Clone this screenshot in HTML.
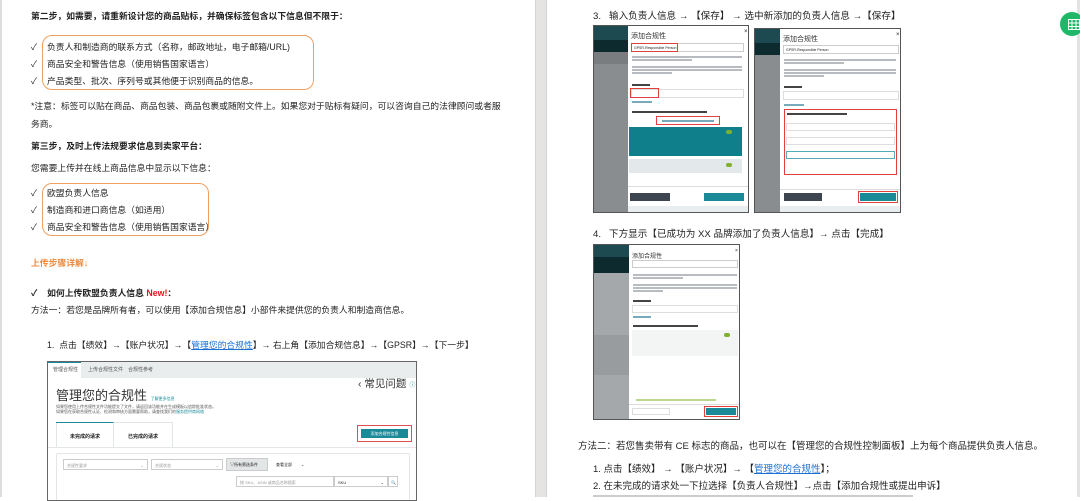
<!DOCTYPE html>
<html><head><meta charset="utf-8">
<style>
*{margin:0;padding:0;box-sizing:border-box}
body{width:1080px;height:497px;overflow:hidden;background:#fff;position:relative;font-family:"Liberation Sans","Noto Sans CJK SC",sans-serif;color:#222}
.a{position:absolute;white-space:nowrap}
.t{font-size:8.8px;line-height:12px}
.r{font-size:9.5px;line-height:12px}
.b{font-weight:bold}
.box{position:absolute;border:1.3px solid #f0a060;border-radius:10px}
.tx{position:absolute;height:1.5px;background:#b8bcc0}
.lk{color:#1a6fd1;text-decoration:underline}
</style></head><body>
<div class="a" style="left:0;top:0;width:2px;height:497px;background:#ddd"></div>
<div class="a" style="left:535px;top:0;width:12px;height:497px;background:#e6e3e3;border-left:1px solid #d5d2d2;border-right:1px solid #d5d2d2"></div>
<div class="a" style="left:1077px;top:0;width:3px;height:497px;background:#e3e3e3"></div>

<!-- left page -->
<div class="a t b" style="left:31px;top:10px">第二步，如需要，请重新设计您的商品贴标，并确保标签包含以下信息但不限于：</div>
<div class="box" style="left:42px;top:35px;width:272px;height:55px"></div>
<div class="a t" style="left:31px;top:41px">✓</div><div class="a t" style="left:47px;top:41px">负责人和制造商的联系方式（名称，邮政地址，电子邮箱/URL)</div>
<div class="a t" style="left:31px;top:58px">✓</div><div class="a t" style="left:47px;top:58px">商品安全和警告信息（使用销售国家语言）</div>
<div class="a t" style="left:31px;top:75px">✓</div><div class="a t" style="left:47px;top:75px">产品类型、批次、序列号或其他便于识别商品的信息。</div>
<div class="a t" style="left:31px;top:100px">*注意：标签可以贴在商品、商品包装、商品包裹或随附文件上。如果您对于贴标有疑问，可以咨询自己的法律顾问或者服</div>
<div class="a t" style="left:31px;top:118px">务商。</div>
<div class="a t b" style="left:31px;top:140px">第三步，及时上传法规要求信息到卖家平台：</div>
<div class="a t" style="left:31px;top:162px">您需要上传并在线上商品信息中显示以下信息：</div>
<div class="box" style="left:42px;top:183px;width:167px;height:53px"></div>
<div class="a t" style="left:31px;top:187px">✓</div><div class="a t" style="left:47px;top:187px">欧盟负责人信息</div>
<div class="a t" style="left:31px;top:204px">✓</div><div class="a t" style="left:47px;top:204px">制造商和进口商信息（如适用）</div>
<div class="a t" style="left:31px;top:221px">✓</div><div class="a t" style="left:47px;top:221px">商品安全和警告信息（使用销售国家语言）</div>
<div class="a t b" style="left:31px;top:257px;color:#f08a3c">上传步骤详解↓</div>
<div class="a t b" style="left:31px;top:287px">✓&nbsp;&nbsp;&nbsp; 如何上传欧盟负责人信息 <span style="color:#e8131a">New!</span>：</div>
<div class="a t" style="left:31px;top:304px">方法一：若您是品牌所有者，可以使用【添加合规信息】小部件来提供您的负责人和制造商信息。</div>
<div class="a t" style="left:47px;top:339px">1.&nbsp; 点击【绩效】→【账户状况】→【<span class="lk">管理您的合规性</span>】→ 右上角【添加合规信息】→【GPSR】→【下一步】</div>

<!-- screenshot left -->
<div class="a" style="left:47px;top:361px;width:370px;height:140px;border:1.5px solid #666;background:#fff;overflow:hidden">
 <div class="a" style="left:0;top:0;width:370px;height:16px;background:#eaeded"></div>
 <div class="a" style="left:0;top:0;width:33px;height:16px;background:#fff;border-top:1.5px solid #1a8a99"></div>
 <div class="a" style="left:5px;top:4px;font-size:5px;color:#555">管理合规性</div>
 <div class="a" style="left:40px;top:4px;font-size:5px;color:#555">上传合规性文件</div>
 <div class="a" style="left:80px;top:4px;font-size:5px;color:#555">合规性参考</div>
 <div class="a" style="left:8px;top:23px;font-size:13px;color:#333">管理您的合规性 <span style="font-size:4px;color:#1a8a99">了解更多信息</span></div>
 <div class="a" style="left:8px;top:42px;font-size:4px;color:#555;line-height:5px">如果您使用上传合规性文件功能提交了文件，请返回该功能并在生成模板以追踪批准状态。<br>如果您在获取合规性认证、检测和审核方面需要帮助，请查找我们的<span style="color:#1a8a99">服务提供商网络</span></div>
 <div class="a" style="left:310px;top:14px;font-size:10.5px;color:#333">‹ 常见问题 <span style="font-size:6px;color:#1a8a99">ⓘ</span></div>
 <div class="a" style="left:8px;top:60px;width:117px;height:25px;border:1px solid #e3e6e6;border-bottom:none"></div>
 <div class="a" style="left:8px;top:60px;width:58px;height:25px;border-top:1.5px solid #1a8a99;border-right:1px solid #e3e6e6"></div>
 <div class="a b" style="left:22px;top:71px;font-size:5px">未完成的请求</div>
 <div class="a b" style="left:80px;top:71px;font-size:5px">已完成的请求</div>
 <div class="a" style="left:309px;top:63px;width:55px;height:17px;border:1px solid #e05050"></div>
 <div class="a" style="left:313px;top:67px;width:47px;height:9px;background:#1a8a99;color:#fff;font-size:4px;text-align:center;line-height:9px">添加合规性信息</div>
 <div class="a" style="left:0;top:85px;width:370px;height:1px;background:#e3e6e6"></div>
 <div class="a" style="left:8px;top:91px;width:354px;height:50px;border:1px solid #e3e6e6;border-radius:2px"></div>
 <div class="a" style="left:15px;top:97px;width:85px;height:11px;border:1px solid #ccc;font-size:4px;color:#999;padding:3px">合规性要求<span style="float:right">⌄</span></div>
 <div class="a" style="left:103px;top:97px;width:72px;height:11px;border:1px solid #ccc;font-size:4px;color:#999;padding:3px">合规状态<span style="float:right">⌄</span></div>
 <div class="a" style="left:178px;top:96px;width:42px;height:13px;background:#e3e6e6;border:1px solid #ccc;font-size:4px;padding:3px">▽所有筛选条件</div>
 <div class="a" style="left:228px;top:100px;font-size:4px">查看全部&nbsp;&nbsp;&nbsp;&nbsp;&nbsp;&nbsp;&nbsp;&nbsp;⌄</div>
 <div class="a" style="left:188px;top:114px;width:98px;height:11px;border:1px solid #ccc;font-size:4px;color:#999;padding:3px">按 SKU、ASIN 或商品名称搜索</div>
 <div class="a" style="left:286px;top:114px;width:54px;height:11px;border:1px solid #ccc;font-size:4px;padding:3px">SKU<span style="float:right">⌄</span></div>
 <div class="a" style="left:340px;top:114px;width:10px;height:11px;border:1px solid #ccc;font-size:4px;padding:3px 2px">🔍</div>
</div>

<!-- right page -->
<div class="a" style="left:593px;top:11px;font-size:9.6px;line-height:12px">3.&nbsp;&nbsp; 输入负责人信息 → 【保存】 → 选中新添加的负责人信息 →【保存】</div>

<!-- img1 -->
<div class="a" style="left:593px;top:25px;width:156px;height:188px;border:1.5px solid #555;background:#8a8d8f;overflow:hidden">
 <div class="a" style="left:0;top:0;width:40px;height:14px;background:#1c4a50"></div>
 <div class="a" style="left:0;top:14px;width:40px;height:12px;background:#0d2a2e"></div>
 <div class="a" style="left:0;top:26px;width:40px;height:12px;background:#7a7d80"></div>
 <div class="a" style="left:34px;top:0;width:121px;height:188px;background:#fff"></div>
 <div class="a" style="left:37px;top:5px;font-size:7px;color:#333">添加合规性</div>
 <div class="a" style="left:150px;top:3px;font-size:6px">×</div>
 <div class="a" style="left:37px;top:17px;width:113px;height:9px;border:1px solid #ccc"></div>
 <div class="a" style="left:37px;top:17px;width:47px;height:9px;border:1px solid #e04040;font-size:3.5px;padding:2px">GPSR-Responsible Person</div>
 <div class="tx" style="left:38px;top:30px;width:110px"></div><div class="tx" style="left:38px;top:33px;width:60px"></div>
 <div class="tx" style="left:38px;top:40px;width:110px"></div><div class="tx" style="left:38px;top:43px;width:110px"></div><div class="tx" style="left:38px;top:46px;width:40px"></div>
 <div class="tx" style="left:38px;top:58px;width:18px;background:#444"></div>
 <div class="a" style="left:37px;top:63px;width:113px;height:9px;border:1px solid #ddd"></div>
 <div class="a" style="left:36px;top:62px;width:29px;height:10px;border:1px solid #e04040"></div>
 <div class="tx" style="left:38px;top:75px;width:20px;background:#7ab"></div>
 <div class="tx" style="left:38px;top:85px;width:75px;background:#444"></div>
 <div class="a" style="left:62px;top:90px;width:64px;height:9px;border:1px solid #e04040"></div>
 <div class="tx" style="left:68px;top:94px;width:52px;background:#7ab"></div>
 <div class="a" style="left:35px;top:101px;width:113px;height:29px;background:#0f7f8c"></div>
 <div class="a" style="left:132px;top:104px;width:6px;height:4px;border-radius:2px;background:#7fb030"></div>
 <div class="a" style="left:35px;top:133px;width:113px;height:14px;background:#e3e8ea"></div>
 <div class="a" style="left:132px;top:137px;width:6px;height:4px;border-radius:2px;background:#7fb030"></div>
 <div class="a" style="left:34px;top:160px;width:121px;height:1px;background:#ddd"></div>
 <div class="a" style="left:36px;top:167px;width:40px;height:8px;background:#3d4550"></div>
 <div class="a" style="left:110px;top:167px;width:40px;height:8px;background:#1a8a99"></div>
 <div class="a" style="left:34px;top:180px;width:121px;height:8px;background:#e8eef0"></div>
</div>

<!-- img2 -->
<div class="a" style="left:754px;top:28px;width:147px;height:185px;border:1.5px solid #555;background:#8a8d8f;overflow:hidden">
 <div class="a" style="left:0;top:0;width:26px;height:14px;background:#1c4a50"></div>
 <div class="a" style="left:0;top:14px;width:26px;height:12px;background:#0d2a2e"></div>
 <div class="a" style="left:25px;top:0;width:122px;height:185px;background:#fff"></div>
 <div class="a" style="left:28px;top:5px;font-size:7px;color:#333">添加合规性</div>
 <div class="a" style="left:141px;top:3px;font-size:6px">×</div>
 <div class="a" style="left:28px;top:16px;width:116px;height:9px;border:1px solid #ccc;font-size:3.5px;padding:2px">GPSR-Responsible Person</div>
 <div class="tx" style="left:29px;top:30px;width:112px"></div><div class="tx" style="left:29px;top:33px;width:60px"></div>
 <div class="tx" style="left:29px;top:40px;width:112px"></div><div class="tx" style="left:29px;top:43px;width:112px"></div><div class="tx" style="left:29px;top:46px;width:40px"></div>
 <div class="tx" style="left:29px;top:57px;width:18px;background:#444"></div>
 <div class="a" style="left:28px;top:62px;width:116px;height:9px;border:1px solid #ddd"></div>
 <div class="tx" style="left:29px;top:75px;width:20px;background:#7ab"></div>
 <div class="a" style="left:29px;top:80px;width:113px;height:66px;border:1px solid #e04040"></div>
 <div class="tx" style="left:32px;top:84px;width:60px;background:#444"></div>
 <div class="a" style="left:31px;top:94px;width:109px;height:8px;border:1px solid #ddd"></div>
 <div class="a" style="left:31px;top:108px;width:109px;height:8px;border:1px solid #ddd"></div>
 <div class="a" style="left:31px;top:122px;width:109px;height:8px;border:1px solid #5ab"></div>
 <div class="a" style="left:25px;top:160px;width:122px;height:1px;background:#ddd"></div>
 <div class="a" style="left:29px;top:164px;width:38px;height:8px;background:#3d4550"></div>
 <div class="a" style="left:103px;top:162px;width:40px;height:12px;border:1px solid #e04040"></div>
 <div class="a" style="left:105px;top:164px;width:36px;height:8px;background:#1a8a99"></div>
 <div class="a" style="left:25px;top:177px;width:122px;height:8px;background:#e8eef0"></div>
</div>

<div class="a" style="left:593px;top:229px;font-size:9.6px;line-height:12px">4.&nbsp;&nbsp; 下方显示【已成功为 XX 品牌添加了负责人信息】→ 点击【完成】</div>

<!-- img3 -->
<div class="a" style="left:593px;top:244px;width:147px;height:176px;border:1.5px solid #555;background:#a5a8aa;overflow:hidden">
 <div class="a" style="left:0;top:0;width:36px;height:12px;background:#1c4a50"></div>
 <div class="a" style="left:0;top:12px;width:36px;height:16px;background:#0d2a2e"></div>
 <div class="a" style="left:0;top:90px;width:36px;height:40px;background:#999c9e"></div>
 <div class="a" style="left:35px;top:0;width:112px;height:176px;background:#fff"></div>
 <div class="a" style="left:38px;top:6px;font-size:6px;color:#333">添加合规性</div>
 <div class="a" style="left:141px;top:3px;font-size:5px">×</div>
 <div class="a" style="left:38px;top:15px;width:106px;height:8px;border:1px solid #ccc"></div>
 <div class="tx" style="left:39px;top:29px;width:104px"></div><div class="tx" style="left:39px;top:32px;width:50px"></div>
 <div class="tx" style="left:39px;top:39px;width:104px"></div><div class="tx" style="left:39px;top:42px;width:104px"></div><div class="tx" style="left:39px;top:45px;width:30px"></div>
 <div class="tx" style="left:39px;top:55px;width:18px;background:#444"></div>
 <div class="a" style="left:38px;top:60px;width:106px;height:8px;border:1px solid #ddd"></div>
 <div class="tx" style="left:39px;top:71px;width:18px;background:#7ab"></div>
 <div class="tx" style="left:39px;top:80px;width:65px;background:#444"></div>
 <div class="a" style="left:38px;top:85px;width:106px;height:26px;background:#f3f5f5"></div>
 <div class="a" style="left:130px;top:88px;width:6px;height:4px;border-radius:2px;background:#7fb030"></div>
 <div class="tx" style="left:42px;top:154px;width:80px;background:#bcd88a"></div>
 <div class="a" style="left:35px;top:159px;width:112px;height:1px;background:#ddd"></div>
 <div class="a" style="left:38px;top:163px;width:38px;height:7px;border:1px solid #ddd"></div>
 <div class="a" style="left:110px;top:161px;width:34px;height:11px;border:1px solid #e04040"></div>
 <div class="a" style="left:112px;top:163px;width:30px;height:7px;background:#1a8a99"></div>
</div>

<div class="a r" style="left:578px;top:441px">方法二：若您售卖带有 CE 标志的商品，也可以在【管理您的合规性控制面板】上为每个商品提供负责人信息。</div>
<div class="a r" style="left:593px;top:464px">1. 点击【绩效】 → 【账户状况】→ 【<span class="lk">管理您的合规性</span>】；</div>
<div class="a r" style="left:593px;top:481px">2. 在未完成的请求处一下拉选择【负责人合规性】→点击【添加合规性或提出申诉】</div>
<div class="a" style="left:593px;top:495px;width:320px;height:2px;background:#ccc"></div>

<!-- green icon -->
<div class="a" style="left:1060px;top:12px;width:24px;height:24px;border-radius:50%;background:#1fb868"></div>
<svg class="a" style="left:1068px;top:19px" width="12" height="11" viewBox="0 0 12 11"><rect x="0.5" y="0.5" width="11" height="10" fill="none" stroke="#fff"/><path d="M0 4H12M0 7.5H12M4 0V11M8 0V11" stroke="#fff"/></svg>
</body></html>
